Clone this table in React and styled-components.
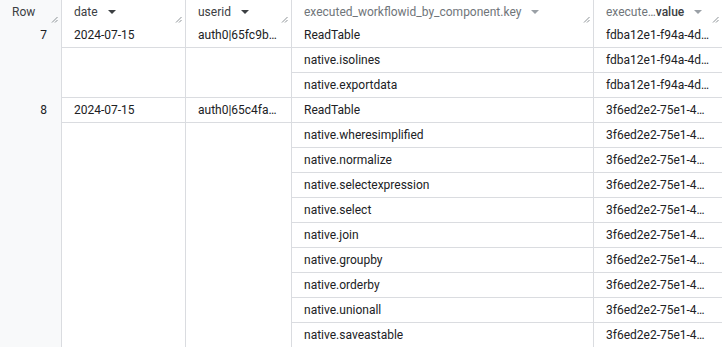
import styled, { createGlobalStyle } from "styled-components";

const GlobalStyle = createGlobalStyle`
    html, body {
        margin: 0;
        padding: 0;
        background: #ffffff;
        overflow: hidden;
    }
    body {
        font-family: Roboto, "Liberation Sans", Arial, sans-serif;
        color: #202124;
    }
`

const Table = styled.div`
    display: grid;
    grid-template-columns: 62px 124px 106px 302px 1fr;
    width: 722px;
    height: 347px;
    overflow: hidden;
    align-content: start;
`

const HeadCell = styled.div`
    position: relative;
    box-sizing: border-box;
    height: 23px;
    display: flex;
    align-items: center;
    padding: 0 12px;
    font-size: 12px;
    color: ${p => p.$muted ? "#70757a" : "#3c4043"};
    background: ${p => p.$gray ? "#f8f9fa" : "#ffffff"};
    border-right: ${p => p.$last ? "none" : "1px solid #dadce0"};
    white-space: nowrap;
`

const Arrow = styled.span`
    display: inline-block;
    width: 0;
    height: 0;
    margin-left: 10px;
    margin-top: 1px;
    border-left: 4px solid transparent;
    border-right: 4px solid transparent;
    border-top: 4px solid ${p => p.$muted ? "#9aa0a6" : "#3c4043"};
`

const Strong = styled.span`
    color: #3c4043;
    font-weight: 500;
`

const Grip = styled.svg`
    position: absolute;
    right: 3px;
    bottom: 0;
`

const RowNum = styled.div`
    box-sizing: border-box;
    grid-row: span ${p => p.$span};
    background: #f8f9fa;
    border-right: 1px solid #dadce0;
    padding: 0 14px 0 0;
    text-align: right;
    font-size: 12px;
    line-height: 24px;
`

const Cell = styled.div`
    box-sizing: border-box;
    grid-row: span ${p => p.$span || 1};
    height: ${p => (p.$span || 1) * 25}px;
    padding: 0 12px;
    font-size: 12px;
    line-height: 24px;
    white-space: nowrap;
    overflow: hidden;
    border-bottom: 1px solid #dadce0;
    border-right: ${p => p.$last ? "none" : "1px solid #dadce0"};
`

const ResizeGrip = () => (
    <Grip width="7" height="7" viewBox="0 0 7 7">
        <path d="M1 6.5 L6.5 1 M4 6.5 L6.5 4" stroke="#80868b" strokeWidth="0.9" fill="none" />
    </Grip>
)

const groups = [
    {
        row: 7,
        date: "2024-07-15",
        user: "auth0|65fc9b…",
        items: [
            ["ReadTable", "fdba12e1-f94a-4d…"],
            ["native.isolines", "fdba12e1-f94a-4d…"],
            ["native.exportdata", "fdba12e1-f94a-4d…"],
        ],
    },
    {
        row: 8,
        date: "2024-07-15",
        user: "auth0|65c4fa…",
        items: [
            "ReadTable",
            "native.wheresimplified",
            "native.normalize",
            "native.selectexpression",
            "native.select",
            "native.join",
            "native.groupby",
            "native.orderby",
            "native.unionall",
            "native.saveastable",
        ].map(k => [k, "3f6ed2e2-75e1-4…"]),
    },
]

const App = () => {
    return (
        <>
            <GlobalStyle />
            <Table>
                <HeadCell $gray>Row<ResizeGrip /></HeadCell>
                <HeadCell>date<Arrow /><ResizeGrip /></HeadCell>
                <HeadCell>userid<Arrow /><ResizeGrip /></HeadCell>
                <HeadCell $muted>executed_workflowid_by_component.key<Arrow $muted /><ResizeGrip /></HeadCell>
                <HeadCell $muted $last>execute…<Strong>value</Strong><Arrow $muted /><ResizeGrip /></HeadCell>

                {groups.map(g => (
                    <Group key={g.row} g={g} />
                ))}
            </Table>
        </>
    )
}

const Group = ({ g }) => {
    const n = g.items.length
    return (
        <>
            <RowNum $span={n}>{g.row}</RowNum>
            <Cell style={{ gridColumn: 2 }}>{g.date}</Cell>
            <Cell style={{ gridColumn: 3 }}>{g.user}</Cell>
            <Cell>{g.items[0][0]}</Cell>
            <Cell $last>{g.items[0][1]}</Cell>
            {n > 1 && <Cell $span={n - 1} style={{ gridColumn: 2 }} />}
            {n > 1 && <Cell $span={n - 1} style={{ gridColumn: 3 }} />}
            {g.items.slice(1).map(([k, v], i) => (
                <Pair key={i} k={k} v={v} />
            ))}
        </>
    )
}

const Pair = ({ k, v }) => (
    <>
        <Cell style={{ gridColumn: 4 }}>{k}</Cell>
        <Cell $last>{v}</Cell>
    </>
)

export default App;
